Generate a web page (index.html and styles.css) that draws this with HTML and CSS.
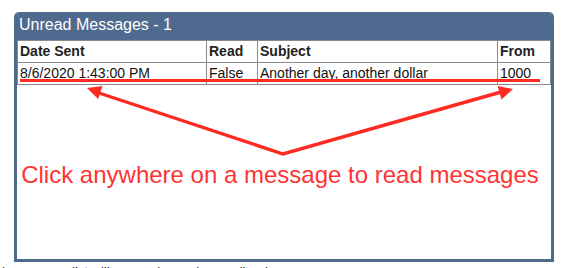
FILE: index.html
```html
<!DOCTYPE html>
<html lang="en">
<head>
  <meta charset="UTF-8"/>
  <title>Unread Messages</title>
  <link rel="stylesheet" href="styles.css">
</head>
<body>
  <div class="panel">
    <div class="panel-title">Unread Messages - 1</div>
    <div class="panel-body">
      <table class="msg-table">
        <tr>
          <th class="col-date">Date Sent</th>
          <th class="col-read">Read</th>
          <th class="col-subject">Subject</th>
          <th class="col-from">From</th>
        </tr>
        <tr>
          <td>8/6/2020 1:43:00 PM</td>
          <td>False</td>
          <td>Another day, another dollar</td>
          <td>1000</td>
        </tr>
      </table>
      <div class="hint">Click anywhere on a message to read messages</div>
    </div>
  </div>
  <div class="below-note">i   message list will appear here when mail arrives</div>

  <!-- annotation overlay -->
  <svg class="overlay" width="569" height="268" viewBox="0 0 569 268">
    <line x1="20" y1="80.5" x2="540" y2="80.5" stroke="#ff2a22" stroke-width="3"/>
    <polyline points="96,92 283,154 501,92" fill="none" stroke="#ff2a22" stroke-width="3.4" stroke-linejoin="miter"/>
    <polygon points="87,88 102.5,85.9 98.1,99.1" fill="#ff2a22"/>
    <polygon points="513,89 501.4,99.5 497.6,86.1" fill="#ff2a22"/>
  </svg>
</body>
</html>
```
FILE: styles.css
```css
body { margin: 0; padding: 0; background: #fff; font-family: "Liberation Sans", Arial, sans-serif; color: #111; width: 569px; height: 268px; overflow: hidden; position: relative;}
.panel { margin: 12px 0 0 14px; width: 540px; box-sizing: border-box; border: 3px solid #4f6a8f; border-top: 0; border-radius: 5px 5px 0 0; overflow: hidden;}
.panel-title { background: #4f6a8f; color: #fff; font-size: 16px; height: 28px; line-height: 26px; padding-left: 2px;}
.panel-body { background: #fff; height: 219px;}
.msg-table { width: 100%; border-collapse: collapse; font-size: 14px;}
.msg-table th, .msg-table td { border: 1px solid #8a8a8a; height: 20px; padding: 0 2px 1px 2px; text-align: left; white-space: nowrap;}
.msg-table th { font-weight: bold; color: #222;}
.col-date { width: 184px;}
.col-read { width: 46px;}
.col-subject { width: 235px;}
.hint { color: #fd3434; font-size: 24px; line-height: 28px; text-align: center; margin-top: 76px; padding-right: 8px;}
.below-note { font-size: 13px; margin: 2px 0 0 2px; color: #222; white-space: pre;}
.overlay { position: absolute; left: 0; top: 0; pointer-events: none;}
```
